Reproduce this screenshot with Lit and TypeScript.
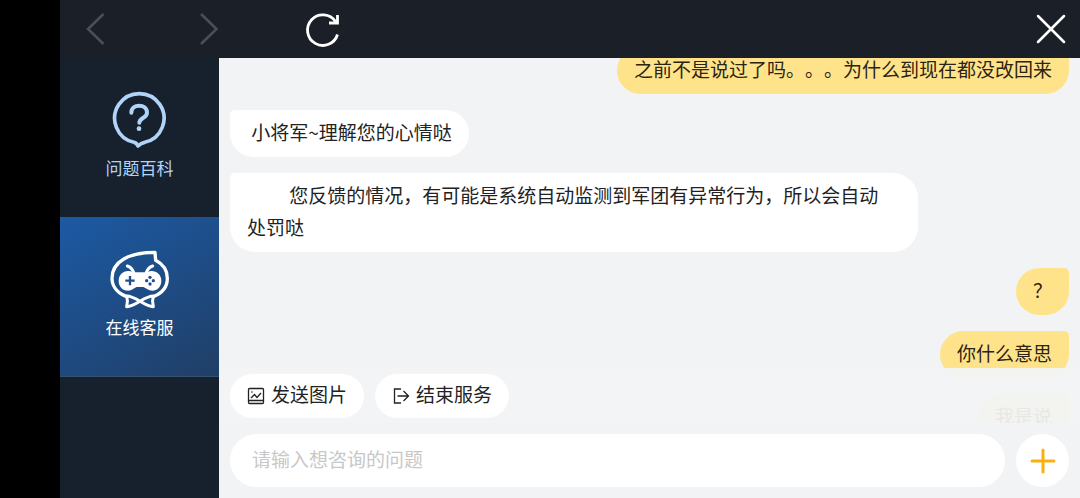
import { LitElement, html, css, svg } from "lit";
import { customElement, property, state, query } from "lit/decorators.js";
import { classMap } from "lit/directives/class-map.js";

type Message = { from: "agent" | "user"; text: string; tail?: string };

const MESSAGES: Message[] = [
  { from: "user", text: "之前不是说过了吗。。。为什么到现在都没改回来" },
  { from: "agent", text: " 小将军~理解您的心情哒" },
  {
    from: "agent",
    text: " \u3000\u3000您反馈的情况，有可能是系统自动监测到军团有异常行为，所以会自动",
    tail: "处罚哒",
  },
  { from: "user", text: "？" },
  { from: "user", text: "你什么意思" },
  { from: "user", text: "我是说" },
];

const questionIcon = svg`
  <svg class="tab-icon" viewBox="150 90 180 180" fill="none" stroke="currentColor" stroke-linecap="round" stroke-linejoin="round" aria-hidden="true">
    <path stroke-width="11" d="M222 247 A74 74 0 1 1 254 247 Q243 249 234 258 Q230 248 222 247 Z"/>
    <path stroke-width="12" d="M214 158 C214 130 261 130 261 158 C261 174 238 174 238 188"/>
    <circle cx="237" cy="206" r="7" fill="currentColor" stroke="none"/>
  </svg>`;

const robotIcon = svg`
  <svg class="tab-icon" viewBox="30 27 180 180" fill="none" stroke="currentColor" stroke-linecap="round" stroke-linejoin="round" aria-hidden="true">
    <path stroke-width="10" d="M80 170 C54 160 36 140 36 115 C36 66 84 37 165 37 L167 61 C188 72 202 92 202 115 C202 140 186 160 160 170"/>
    <path stroke-width="9" d="M82 78 Q95 82 101 97 M158 78 Q145 82 139 97"/>
    <path fill="currentColor" stroke="none" d="M84 93 C94 92 97 97 105 97 H136 C144 97 147 92 157 93 C174 95 184 107 184 122 C184 140 172 152 157 152 C146 152 138 144 130 141 H110 C102 144 96 152 84 152 C68 152 56 140 56 122 C56 105 68 94 84 93 Z"/>
    <path class="cut" stroke-width="7" stroke-linecap="butt" d="M90 108 V136 M76 122 H104"/>
    <g class="cut-fill" stroke="none">
      <circle cx="150" cy="112" r="5"/><circle cx="150" cy="132" r="5"/>
      <circle cx="140" cy="122" r="5"/><circle cx="160" cy="122" r="5"/>
    </g>
    <path class="bow" stroke-width="9" d="M80 168 Q94 168 120 184 Q146 168 160 168 Q155 184 160 200 Q146 200 120 184 Q94 200 80 200 Q85 184 80 168 Z"/>
  </svg>`;

@customElement("chat-bubble")
export class ChatBubble extends LitElement {
  static styles = css`
    :host {
      display: flex;
      flex: none;
    }
    .bubble {
      box-sizing: border-box;
      max-width: 82%;
      margin: 0;
      padding: 6px 17px 9px;
      border-radius: 5px 25px 25px 25px;
      background: #fff;
      color: #222;
      font-size: 19px;
      line-height: 32px;
      white-space: pre-wrap;
      text-spacing-trim: space-all;
    }
    .user {
      margin-left: auto;
      border-radius: 25px 5px 25px 25px;
      background: #ffe38b;
      color: #2c2410;
    }
    .tail {
      white-space: nowrap;
    }
  `;

  @property({ attribute: false }) message!: Message;

  render() {
    const { from, text, tail } = this.message;
    return html`<p class=${classMap({ bubble: true, user: from === "user" })}>${text}${tail ? html`<span class="tail">${tail}</span>` : null}</p>`;
  }
}

@customElement("app-root")
export class AppRoot extends LitElement {
  static styles = css`
    :host {
      display: grid;
      grid-template-columns: 159px minmax(0, 1fr);
      grid-template-rows: 58px minmax(0, 1fr);
      box-sizing: border-box;
      height: 100vh;
      padding-left: 60px;
      background: #000;
      font-family: "Noto Sans CJK SC", "Noto Sans", sans-serif;
    }
    button {
      margin: 0;
      padding: 0;
      border: 0;
      background: none;
      color: inherit;
      font: inherit;
      cursor: pointer;
    }
    svg {
      display: block;
    }
    .topbar {
      grid-column: 1 / -1;
      display: flex;
      align-items: center;
      gap: 69px;
      padding: 0 7px 0 14px;
      background: #1b2028;
      color: #fff;
    }
    .nav {
      display: grid;
      place-items: center;
      width: 44px;
      height: 44px;
    }
    .nav:disabled {
      color: #4a4e57;
      cursor: default;
    }
    .close {
      margin-left: auto;
    }
    .sidebar {
      background: #17202d;
    }
    .tab {
      display: flex;
      flex-direction: column;
      align-items: center;
      gap: 6px;
      box-sizing: border-box;
      width: 100%;
      height: 159px;
      padding-top: 32px;
      color: #b1d3f8;
      font-size: 17px;
      line-height: 24px;
    }
    .tab.active {
      height: 160px;
      border-bottom: 1px solid #34516f;
      background: linear-gradient(150deg, #1c5aa4 0%, #1e4c85 50%, #203f66 100%);
      color: #fff;
    }
    .tab-icon {
      width: 60px;
      height: 60px;
    }
    .cut {
      stroke: #1e5090;
    }
    .cut-fill {
      fill: #1e5090;
    }
    .bow {
      fill: #1e4d89;
    }
    .panel {
      display: flex;
      flex-direction: column;
      min-height: 0;
      background: #f2f3f5;
    }
    .conversation {
      position: relative;
      flex: 1;
      min-height: 0;
    }
    .messages {
      display: flex;
      flex-direction: column;
      gap: 16px;
      box-sizing: border-box;
      height: 100%;
      padding: 0 11px 55px;
      overflow-y: auto;
      scrollbar-width: none;
    }
    .quick {
      position: absolute;
      inset: auto 0 0 0;
      display: flex;
      gap: 11px;
      padding: 6px 11px 5px;
      background: rgba(242, 243, 245, 0.94);
    }
    .chip {
      display: flex;
      align-items: center;
      gap: 6px;
      box-sizing: border-box;
      height: 44px;
      padding: 0 17px 6px;
      border-radius: 22px;
      background: #fff;
      color: #222;
      font-size: 19px;
    }
    .chip svg {
      margin-top: 6px;
    }
    .composer {
      display: flex;
      gap: 11px;
      padding: 11px;
    }
    .field {
      box-sizing: border-box;
      flex: 1;
      min-width: 0;
      height: 53px;
      padding: 0 22px 4px;
      border: 0;
      border-radius: 27px;
      outline: 0;
      background: #fff;
      color: #222;
      font: inherit;
      font-size: 19px;
    }
    .field::placeholder {
      color: #c8c8c8;
      opacity: 1;
    }
    .more {
      display: grid;
      place-items: center;
      width: 53px;
      height: 53px;
      border-radius: 50%;
      background: #fff;
      color: #f9b011;
    }
  `;

  @state() private tab = "service";
  @query(".messages") private list!: HTMLElement;

  async firstUpdated() {
    await Promise.all(
      Array.from(this.list.children, (el) => (el as LitElement).updateComplete),
    );
    this.list.scrollTop = 11;
  }

  private renderTab(id: string, label: string, icon: unknown) {
    return html`
      <button
        class=${classMap({ tab: true, active: this.tab === id })}
        @click=${() => (this.tab = id)}
      >
        ${icon}<span>${label}</span>
      </button>
    `;
  }

  render() {
    return html`
      <header class="topbar">
        <button class="nav" aria-label="后退" disabled>
          <svg width="44" height="44" fill="none" stroke="currentColor" stroke-width="2.6"><path d="M29.500 7 L14 22 L29.500 37"/></svg>
        </button>
        <button class="nav" aria-label="前进" disabled>
          <svg width="44" height="44" fill="none" stroke="currentColor" stroke-width="2.6"><path d="M14 7 L29.500 22 L14 37"/></svg>
        </button>
        <button class="nav" aria-label="刷新">
          <svg width="44" height="44" fill="none" stroke="currentColor" stroke-width="2.8"><path d="M37.500 27.500 A15.300 15.300 0 1 1 35.500 14.500 M37.500 8 V16 H29"/></svg>
        </button>
        <button class="nav close" aria-label="关闭">
          <svg width="44" height="44" fill="none" stroke="currentColor" stroke-width="2.5" stroke-linecap="round"><path d="M9 9 L35 35 M35 9 L9 35"/></svg>
        </button>
      </header>
      <nav class="sidebar">
        ${this.renderTab("wiki", "问题百科", questionIcon)}
        ${this.renderTab("service", "在线客服", robotIcon)}
      </nav>
      <main class="panel">
        <div class="conversation">
          <div class="messages">
            ${MESSAGES.map((m) => html`<chat-bubble .message=${m}></chat-bubble>`)}
          </div>
          <div class="quick">
            <button class="chip">
              <svg width="18" height="18" fill="none" stroke="currentColor" stroke-width="1.3"><rect x="1.5" y="1.5" width="15" height="15" rx="1"/><path d="M1.500 13.500 H16.500 M4 11 L7.500 7.500 L10 10.500 L14 6"/><circle cx="5" cy="5" r=".8" fill="currentColor" stroke="none"/></svg>
              发送图片
            </button>
            <button class="chip">
              <svg width="18" height="18" fill="none" stroke="currentColor" stroke-width="1.3"><path d="M9 2 H2.500 V16 H9 M5.500 9 H16.500 M11.500 4 L16.500 9 L11.500 14"/></svg>
              结束服务
            </button>
          </div>
        </div>
        <form class="composer" @submit=${(e: Event) => e.preventDefault()}>
          <input class="field" type="text" aria-label="咨询的问题" placeholder="请输入想咨询的问题" />
          <button class="more" type="button" aria-label="更多">
            <svg width="26" height="26" fill="none" stroke="currentColor" stroke-width="3" stroke-linecap="round"><path d="M13 2 V24 M2 13 H24"/></svg>
          </button>
        </form>
      </main>
    `;
  }
}
